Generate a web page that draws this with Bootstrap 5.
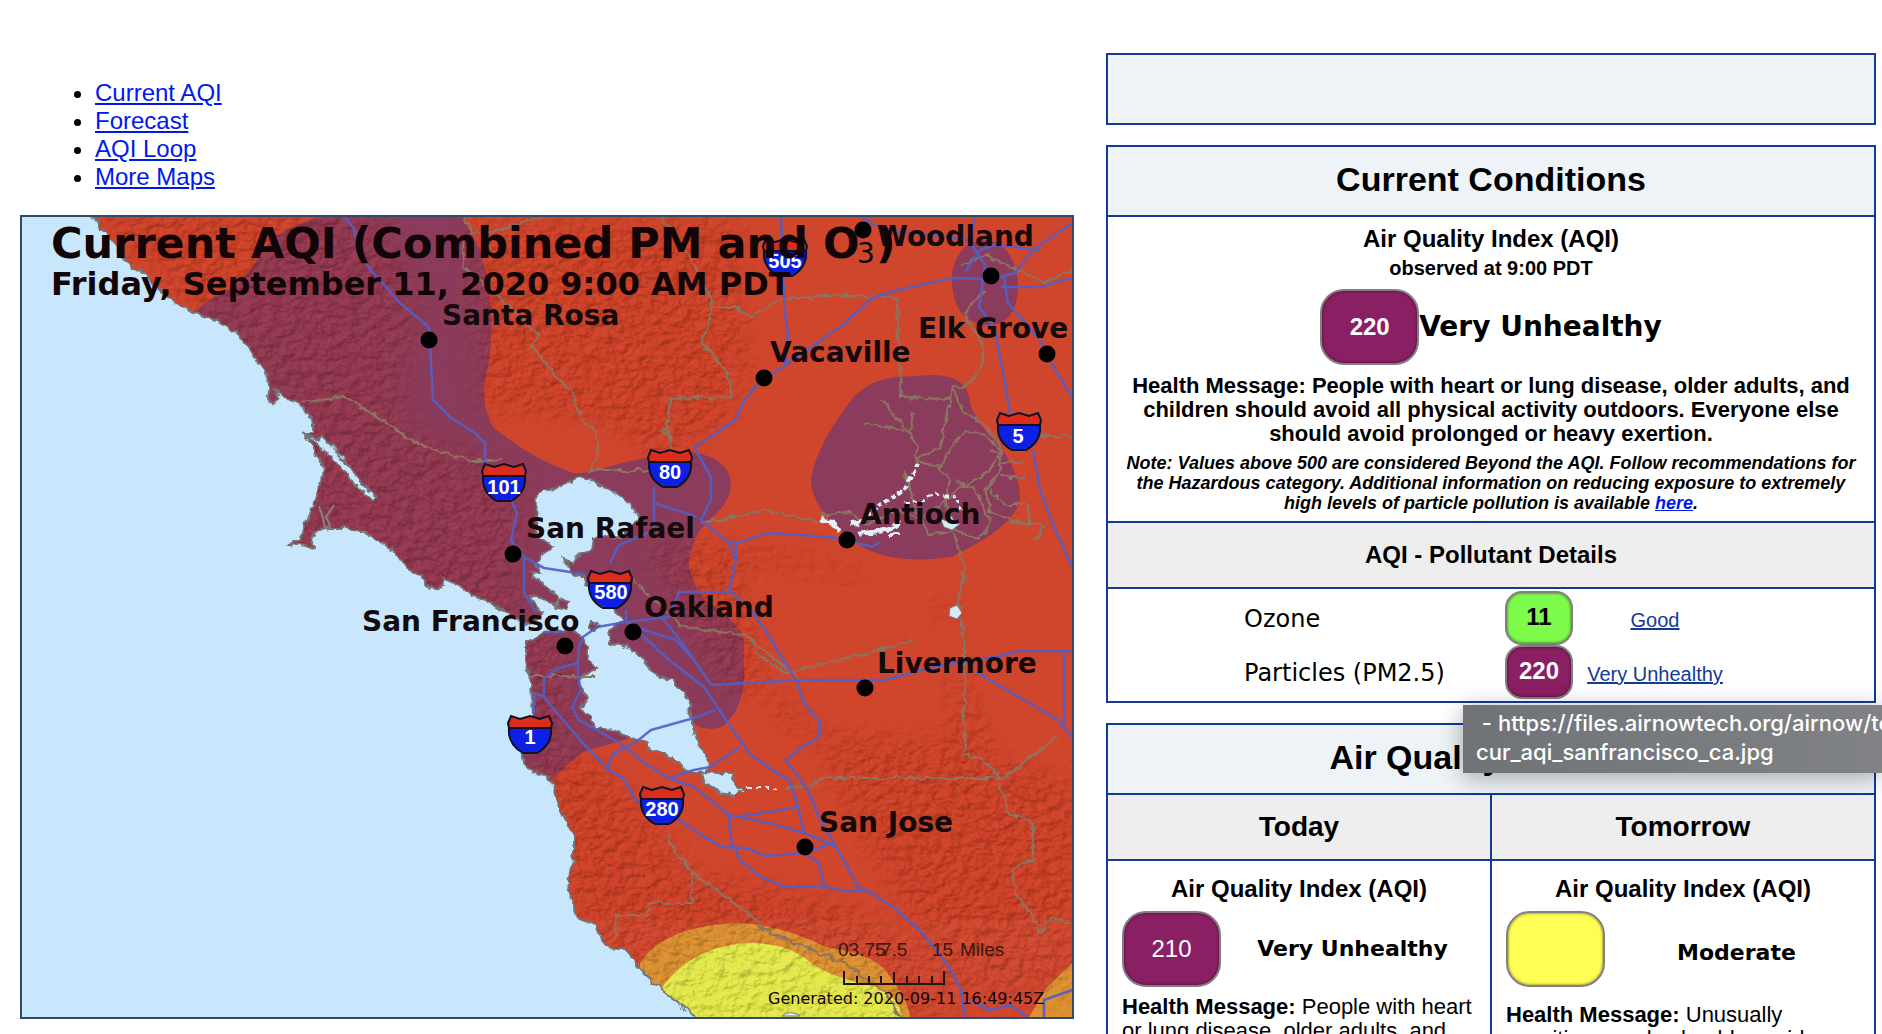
<!DOCTYPE html>
<html lang="en">
<head>
<meta charset="utf-8">
<meta name="viewport" content="width=device-width, initial-scale=1">
<title>AIRNow - San Francisco</title>
<link href="https://cdn.jsdelivr.net/npm/bootstrap@5.3.0/dist/css/bootstrap.min.css" rel="stylesheet">
<style>
:root{--navy:#123a96;--head:#edf3f7;--sub:#eee}
body{font-family:"Liberation Sans",Arial,sans-serif;color:#000;font-size:22px;line-height:24px;overflow-x:hidden}
a{color:#0018ee}
.page{padding:53px 6px 20px 20px;gap:32px}
.col-map{flex:1054 1 0;min-width:0}
.col-info{flex:770 1 0;min-width:0;gap:20px}
.map-links{font-size:24px;line-height:28px;margin:26px 0 24px;padding-left:75px}
.map-frame{border:2px solid #2f4a6c}
.map-frame svg{display:block;width:100%;height:auto}
.panel{border:2px solid var(--navy)}
.panel-title{background:var(--head);font-size:34px;line-height:40px;font-weight:700;height:68px;padding-bottom:4px;margin:0}
.sub-title{background:var(--sub);border-top:2px solid var(--navy);border-bottom:2px solid var(--navy);font-size:24px;line-height:28px;font-weight:700;height:68px;margin:0}
.day-title{font-size:28px}
.aqi-name{font-size:24px;line-height:28px;font-weight:700;margin:0}
.observed{font-size:20px;line-height:30px;font-weight:700;margin:0 0 6px}
.chip{width:99px;height:76px;border:2px solid #857d83;border-radius:24px;font-size:24px;display:flex;align-items:center;justify-content:center;flex:none;box-shadow:inset 0 0 3px #0009}
.chip-sm{width:68px;height:54px;border-radius:17px;font-weight:700;padding-bottom:2px}
.chip-purple{background:#8a1f63;color:#fff}
.chip-green{background:#7dfc4b}
.chip-yellow{background:#fffe54}
.level{font-family:"DejaVu Sans",Verdana,sans-serif;font-weight:700;font-size:28px;line-height:32px}
.level-sm{font-size:22px}
.conditions{border-top:2px solid var(--navy);padding:8px 12px}
.msg{font-weight:700;margin:9px 0 0}
.note{font-size:18px;line-height:20px;font-weight:700;font-style:italic;margin:7px 0 0}
.pollutants{margin:2px 0 2px 136px}
.pollutants td,.pollutants th{padding:0;height:54px;vertical-align:middle}
.pollutants th{font-family:"DejaVu Sans",Verdana,sans-serif;font-size:24px;font-weight:400;width:261px;padding-top:2px}
.pollutants a{font-size:20px;color:var(--navy)}
.pollutants .link-cell{width:164px;text-align:center;padding:4px 0 0}
.day{flex:1 1 0;min-width:0;padding-top:0}
.day + .day{border-left:2px solid var(--navy)}
.day .aqi-name{margin-top:14px}
.day-body{padding:8px 6px 0 14px}
.tip{top:652px;left:357px;right:-6px;height:68px;overflow:hidden;background:linear-gradient(90deg,#6f7377,#808285);color:#fff;font-family:Inter,sans-serif;font-weight:500;font-size:22px;line-height:29px;padding:4px 0 0 13px;white-space:pre}
.tip-shade{box-shadow:0 4px 24px #0005}
.city text{font:700 28px "DejaVu Sans",Verdana,sans-serif;fill:#140a0c}
.shield-no text{font:700 20px "Liberation Sans",Arial,sans-serif;fill:#fff;text-anchor:middle}
.relief-layer{mix-blend-mode:hard-light}
</style>
<script src="https://cdn.jsdelivr.net/npm/bootstrap@5.3.0/dist/js/bootstrap.bundle.min.js"></script>
</head>
<body>
<main class="page d-flex align-items-start">
<section class="col-map">
<ul class="map-links">
<li><a href="#current">Current AQI</a></li>
<li><a href="#forecast">Forecast</a></li>
<li><a href="#loop">AQI Loop</a></li>
<li><a href="#maps">More Maps</a></li>
</ul>
<div class="map-frame" id="current">
<svg viewBox="22 217 1050 800" role="img" aria-label="Current AQI map of the San Francisco Bay Area">
<defs>
<filter id="rough" filterUnits="userSpaceOnUse" x="0" y="190" width="1100" height="850"><feTurbulence type="fractalNoise" baseFrequency=".12" numOctaves="2" seed="4"/><feDisplacementMap in="SourceGraphic" scale="8" xChannelSelector="R" yChannelSelector="G"/></filter>
<filter id="relief" filterUnits="userSpaceOnUse" x="22" y="217" width="1050" height="800" color-interpolation-filters="sRGB"><feTurbulence type="fractalNoise" baseFrequency=".09 .12" numOctaves="4" seed="11"/><feDiffuseLighting lighting-color="#fff" surfaceScale="5" diffuseConstant=".57"><feDistantLight azimuth="225" elevation="60"/></feDiffuseLighting></filter>
<filter id="soft" x="-30%" y="-30%" width="160%" height="160%"><feGaussianBlur stdDeviation="14"/></filter>
<path id="coast" d="M80 200L94 217 100 227 109 237 120 253 130 267 143 273 154 285 171 300 184 307 200 314 218 322 236 333 246 343 257 360 266 373 270 390 266 395 273 405 279 400 275 390 286 398 300 405 307 412 314 425 314 433 307 434 316 440 322 435 329 443 347 463 365 487 378 498 372 500 358 487 340 467 326 452 311 440 304 432 317 455 324 467 322 480 313 507 302 533 299 540 290 544 315 547 310 540 315 532 329 528 347 528 365 532 383 543 395 553 404 567 422 577 426 585 438 590 445 585 442 577 451 582 461 587 472 595 490 602 502 610 515 619 526 624 538 620 542 613 533 603 529 595 538 595 547 603 556 605 558 597 544 585 531 573 540 572 535 563 540 557 554 548 547 542 538 537 536 530 537 492 554 489 569 482 579 477 597 483 615 492 629 503 639 517 629 527 622 537 594 538 592 550 577 557 572 563 563 558 570 570 574 577 585 575 588 587 601 603 615 612 624 620 615 625 608 630 610 642 627 648 642 657 647 667 661 678 672 680 685 693 690 707 694 733 704 753 710 767 704 772 733 773 736 787 744 790 733 796 715 790 704 782 702 772 686 770 672 758 647 748 647 742 626 737 615 730 594 728 592 717 581 710 586 697 579 683 583 675 597 668 588 660 588 647 583 637 572 630 544 632 538 638 526 641 526 660 531 683 533 713 526 735 522 750 524 763 533 773 547 775 554 787 556 800 574 837 574 853 568 890 577 917 592 922 606 947 626 950 643 973 663 992 697 1017 710 1040H1090V200ZM560 600l10 2 -3 8 -10 -2ZM591 621l8 2 -3 8 -7 -2Z"/>
<mask id="landmask" maskUnits="userSpaceOnUse" x="0" y="190" width="1100" height="850"><use href="#coast" fill="#fff" filter="url(#rough)"/></mask>
<mask id="hills" maskUnits="userSpaceOnUse" x="0" y="190" width="1100" height="850"><g fill="#fff" filter="url(#soft)"><path d="M80 200H370L420 300 400 420 520 480 520 640 280 560 300 420ZM470 217H740L750 360 720 430 660 460 600 420 480 410Z"/><path d="M500 630H570V740L640 800 690 870 850 905 940 960 950 1040H640L540 850ZM640 545L740 540 850 570 930 600 1000 760 1080 780V1000H960L840 800 800 700 720 690ZM740 560L780 730 950 740 950 600Z"/></g></mask>
<g id="shield"><path d="M-22-7H22C22 5 16 15 0 19-16 15-22 5-22-7Z" fill="#0d21e6"/><path d="M-21-8L-22-12-19-19-10-16 0-19 10-16 19-19 22-12 21-8Z" fill="#dc2d1c"/><path d="M-21-7L-22-12-19-19-10-16 0-19 10-16 19-19 22-12 21-7C22 5 16 13 7 18H-7C-16 13-22 5-21-7ZM-21-7H21" fill="none" stroke="#101026" stroke-width="2"/></g>
</defs>
<rect x="22" y="217" width="1050" height="800" fill="#c8e7fc"/>
<g mask="url(#landmask)">
<path d="M22 217H1072V1017H22Z" fill="#d0462d"/>
<path fill="#8b3b5b" d="M321 217Q295 222 271 240L250 270Q240 285 214 297L190 314 100 500 400 790H540Q565 766 583 752L690 720Q703 733 722 727 742 710 744 680V640Q738 620 704 600 685 570 690 557 693 535 707 522 735 500 730 477 722 453 683 452 650 455 607 467 590 474 573 473 530 458 493 427 478 400 488 367 498 310 480 250L463 217Z"/>
<path fill="#8b3b5b" d="M933 375Q965 376 969 397 971 418 1001 447 1020 475 1020 498 1018 525 951 557 890 566 856 543 811 510 811 480 815 450 844 410 862 380 897 377ZM985 240C1002 240 1018 258 1018 287 1018 312 1005 327 985 325 963 322 952 306 952 278 952 256 967 240 985 240Z"/>
<path fill="#dc9030" d="M640 963Q665 925 740 923 780 925 826 947 880 955 890 977 905 995 911 1017H640ZM1072 963L1047 987 1029 1017H1072Z"/>
<path fill="#e4ea4a" d="M655 997Q690 943 754 943 790 944 811 963 830 977 876 987 900 998 902 1017H650Z"/>
<g mask="url(#hills)"><path d="M22 217H1072V920H22Z" fill="#c8200a" opacity=".14"/></g>
<g class="relief-layer" mask="url(#hills)" opacity=".27"><rect x="22" y="217" width="1050" height="800" filter="url(#relief)"/></g>
</g>
<use href="#coast" fill="none" stroke="#777275" stroke-width="2" filter="url(#rough)"/>
<g fill="none" stroke="#8c7460" stroke-width="2.2" filter="url(#rough)">
<path d="M463 217L473 233 493 232 540 218M463 235V267L500 297 537 333 533 347 553 373 573 393 580 417 597 433V457L590 470H650M660 217L687 253 703 280 713 307 703 343 727 373 732 397 670 399 667 430 672 453M713 307H737L750 317 780 300 826 295 897 298 901 398 951 399M1072 270L1045 283 985 255 960 265M985 290L965 313 970 325 983 343V363L972 382 954 387 947 413 940 447 915 460"/>
<path d="M304 402L346 397 407 437 426 447 469 460 501 460M701 523L769 510 819 523M954 533L965 570 958 600 964 640 965 755 983 760 1001 778H822L811 787H786M1004 777L1058 737M999 783L1008 813 1033 823V860L1011 870 1015 893 1031 913 1040 933 1051 918 1072 925M669 833L672 847 694 873 744 910 769 933 844 963 883 990 901 1017M692 873V903H649V915H615L617 937M756 653L786 673 851 657 911 642M529 676H594M633 580L683 627 744 635 797 677"/>
<path d="M865 423L910 432 918 450 915 460M880 400L910 432 914 412M915 460L940 468 950 450 965 430 985 435 1000 450 990 470 975 480 955 490 948 500M940 468L950 480 945 500 955 530 980 540 990 520 975 490 955 480M954 387L960 408 985 425 1000 445 1000 470 985 490 990 510 1010 520 1028 525V505H1005L990 490M820 515L850 512 865 525 900 510 920 520 945 500M905 470L915 510 930 535 955 530M990 450L1000 460M1001 477H1025M1000 463H1025M1040 436H1072M1010 522L1045 525 1035 540M672 420L662 430 672 440"/>
</g>
<g fill="none" stroke="#e4f1fb" filter="url(#rough)"><path d="M918 463L904 490 879 506 857 526" stroke-width="4" stroke-dasharray="5 3"/><path d="M905 505L925 500 935 495 955 497 962 510" stroke-width="3" stroke-dasharray="4 4"/><path d="M820 518L833 522 838 532M850 524L864 522M858 534L885 530 900 524M888 535H900" stroke-width="4"/><path d="M747 788H776" stroke-width="2" stroke-dasharray="5 4"/></g>
<path d="M940 518l6 3 6-5 2 6 6 2-8 6-8-3ZM950 608l7-3 5 8-5 6-8-3ZM782 1016q8-7 18 0Z" fill="#d5ecf8" stroke="#817a70"/>
<path d="M319 506l4 12 2 10 6-2M334 505l-8 12 4 8" fill="none" stroke="#8b7f86" stroke-width="2"/>
<g fill="none" stroke="#545fc4" stroke-width="2.6" stroke-linejoin="round" opacity=".9">
<path d="M345 217L355 230 357 253 371 270 400 303 429 327 433 400 450 417 475 433 485 443V462L504 483 517 513 511 540 524 557V593L536 612M524 557L544 568 583 574M544 632H565M626 622L597 627 583 637 579 647 578 663 558 668 544 678V697L563 720 583 743 608 770 622 777 636 800 679 820 701 835 722 847 747 848 765 856 804 853 833 843"/>
<path d="M578 663V677L581 690 572 707 579 720 597 730 626 747 644 763 669 778 694 787 729 815 769 823 804 833 822 840 836 847 851 873 858 887 872 893 897 910 919 930 936 950 951 970 961 990 965 1017M729 815L731 840 740 860 761 877 786 887H826L844 891H869M804 853L819 863 824 885M544 697L535 693 533 713M608 770L612 755 626 747 636 742 651 730 694 718 715 710M669 778L694 770 710 767 740 747M733 817L769 812 797 807"/>
<path d="M626 610V622L644 637 669 660 704 687 724 717 740 740 751 755 783 777 790 780 797 803 804 833M626 622L644 630 676 640 694 660 711 685 800 680H886L933 667 976 660 1004 655 1019 651H1072M1064 651V727M976 672L1019 697 1058 720 1072 737M694 447L711 477V500L701 520 729 543 736 560 729 590 751 610 765 630 790 670 797 683 804 703 820 723 819 737 801 748 786 760 808 790 819 817 836 847M626 622L669 617 679 592H729M736 560V543L769 533 804 535 836 538 872 547 880 542M729 543H736M660 615L680 640 694 660"/>
<path d="M1072 223L1033 250 1015 273 990 279 954 278 897 290 872 298 840 327 783 367 758 383 745 400 735 420 711 437 694 447M654 487V503L697 517M654 503V530L619 545 610 563M781 217L783 277 785 313 788 333 785 367M861 217L883 230 933 235 969 240 985 265 979 307 994 327 1004 377 1010 413M1033 450L1040 490 1054 527 1072 567M1004 277L1008 303 1040 340 1051 363 1072 397M1001 287H1040L1072 278M965 272L980 250 995 245 1040 250M970 240L975 217M970 1000L990 1010 1010 1005 1028 1017M1044 1017V1000L1072 990"/>
</g>
<use href="#shield" x="785" y="258"/><use href="#shield" x="504" y="483"/><use href="#shield" x="670" y="469"/><use href="#shield" x="610" y="590"/><use href="#shield" x="530" y="735"/><use href="#shield" x="662" y="806"/><use href="#shield" x="1019" y="432"/>
<g class="shield-no"><text x="785" y="268">505</text><text x="504" y="494">101</text><text x="670" y="479">80</text><text x="611" y="599">580</text><text x="530" y="744">1</text><text x="662" y="816">280</text><text x="1018" y="443">5</text></g>
<g><circle cx="429" cy="340" r="8.5"/><circle cx="863" cy="230" r="8.5"/><circle cx="991" cy="276" r="8.5"/><circle cx="1047" cy="354" r="8.5"/><circle cx="764" cy="378" r="8.5"/><circle cx="847" cy="540" r="8.5"/><circle cx="513" cy="554" r="8.5"/><circle cx="565" cy="646" r="8.5"/><circle cx="633" cy="632" r="8.5"/><circle cx="865" cy="688" r="8.5"/><circle cx="805" cy="847" r="8.5"/></g>
<g class="city"><text x="442" y="325">Santa Rosa</text><text x="877" y="246">Woodland</text><text x="918" y="338">Elk Grove</text><text x="770" y="362">Vacaville</text><text x="860" y="524">Antioch</text><text x="526" y="538">San Rafael</text><text x="362" y="631">San Francisco</text><text x="644" y="617">Oakland</text><text x="877" y="673">Livermore</text><text x="819" y="832">San Jose</text></g>
<g font-family="DejaVu Sans, Verdana, sans-serif" fill="#120508"><text x="51" y="258" font-size="43" font-weight="700">Current AQI (Combined PM and O</text><text x="857" y="263" font-size="28">3</text><text x="876" y="258" font-size="43" font-weight="700">)</text><text x="51" y="295" font-size="32" font-weight="700">Friday, September 11, 2020 9:00 AM PDT</text><text x="768" y="1004" font-size="16">Generated: 2020-09-11 16:49:45Z</text></g>
<g font-family="Liberation Sans, Arial, sans-serif" font-size="19" fill="#3a1610"><text x="838" y="956">03.75</text><text x="881" y="956">7.5</text><text x="932" y="956">15</text><text x="960" y="956">Miles</text></g>
<path d="M844 971V984H944V971M857 976V984M869 976V984M881 976V984M894 972V984M907 976V984M919 976V984M932 976V984" fill="none" stroke="#26130e" stroke-width="2"/>
</svg>
</div>
</section>
<section class="col-info d-flex flex-column position-relative">
<div class="panel"><div class="panel-title"></div></div>
<div class="panel">
<h2 class="panel-title d-flex align-items-center justify-content-center">Current Conditions</h2>
<div class="conditions text-center">
<p class="aqi-name">Air Quality Index (AQI)</p>
<p class="observed">observed at 9:00 PDT</p>
<div class="d-flex align-items-center justify-content-center"><div class="chip chip-purple fw-bold">220</div><span class="level">Very Unhealthy</span></div>
<p class="msg">Health Message: People with heart or lung disease, older adults, and children should avoid all physical activity outdoors. Everyone else should avoid prolonged or heavy exertion.</p>
<p class="note">Note: Values above 500 are considered Beyond the AQI. Follow recommendations for the Hazardous category. Additional information on reducing exposure to extremely high levels of particle pollution is available <a href="#beyond">here</a>.</p>
</div>
<h3 class="sub-title d-flex align-items-center justify-content-center">AQI - Pollutant Details</h3>
<table class="pollutants">
<tr><th scope="row">Ozone</th><td><div class="chip chip-sm chip-green">11</div></td><td class="link-cell"><a href="#good">Good</a></td></tr>
<tr><th scope="row">Particles (PM2.5)</th><td><div class="chip chip-sm chip-purple">220</div></td><td class="link-cell"><a href="#very-unhealthy">Very Unhealthy</a></td></tr>
</table>
</div>
<div class="panel" id="forecast">
<h2 class="panel-title d-flex align-items-center justify-content-center">Air Quality Forecast</h2>
<div class="d-flex">
<div class="day">
<h3 class="sub-title day-title d-flex align-items-center justify-content-center">Today</h3>
<p class="aqi-name text-center">Air Quality Index (AQI)</p>
<div class="day-body">
<div class="d-flex align-items-center"><div class="chip chip-purple">210</div><span class="level level-sm flex-fill text-center">Very Unhealthy</span></div>
<p class="mt-2 mb-0"><b>Health Message:</b> People with heart or lung disease, older adults, and children should avoid all physical activity outdoors.</p>
</div>
</div>
<div class="day">
<h3 class="sub-title day-title d-flex align-items-center justify-content-center">Tomorrow</h3>
<p class="aqi-name text-center">Air Quality Index (AQI)</p>
<div class="day-body">
<div class="d-flex align-items-center"><div class="chip chip-yellow"></div><span class="level level-sm flex-fill text-center pt-2">Moderate</span></div>
<p class="mt-3 mb-0"><b>Health Message:</b> Unusually sensitive people should consider reducing prolonged or heavy exertion.</p>
</div>
</div>
</div>
</div>
<div class="tip tip-shade position-absolute" role="tooltip"> - https://files.airnowtech.org/airnow/today/
cur_aqi_sanfrancisco_ca.jpg</div>
</section>
</main>
</body>
</html>
